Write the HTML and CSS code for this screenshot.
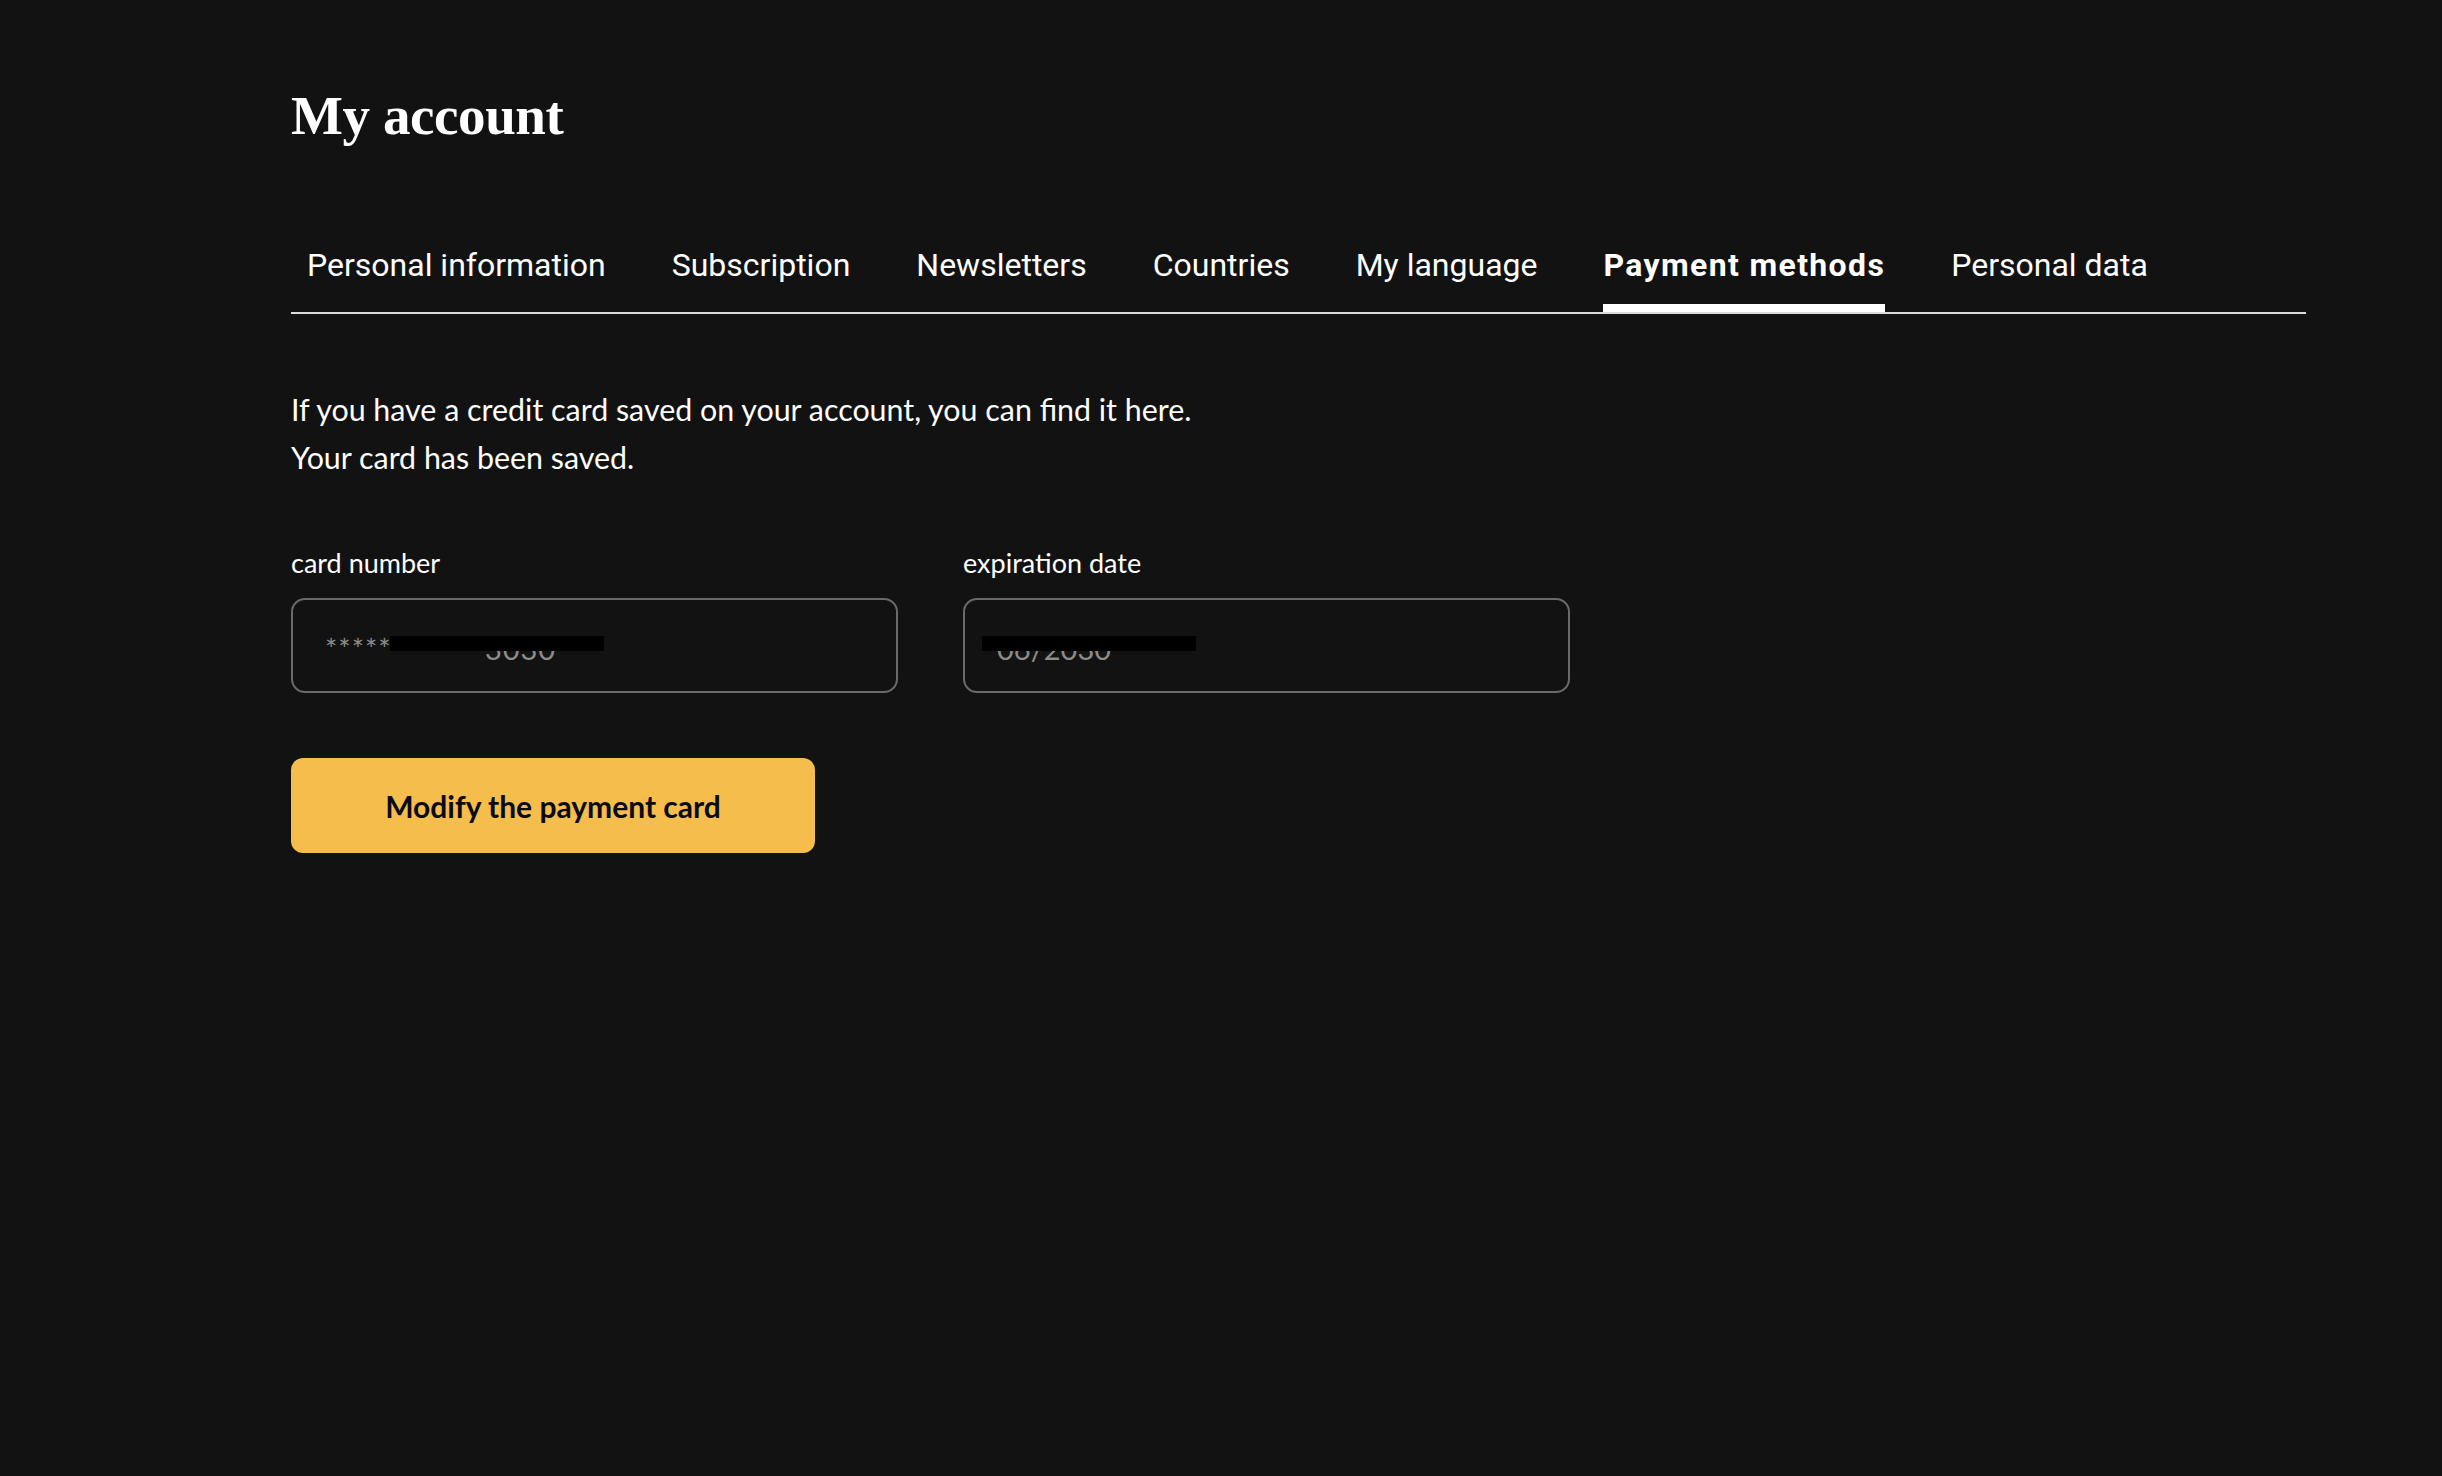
FILE: index.html
```html
<!DOCTYPE html>
<html lang="en">
<head>
    <meta charset="UTF-8">
    <meta name="viewport" content="width=device-width, initial-scale=1.0">
    <title>My account - Payment methods</title>
    <link rel="stylesheet" href="styles.css">
</head>
<body>
    <div class="page">
        <h1 class="title">My account</h1>

        <nav class="tabs">
            <a class="tab" href="#">Personal information</a>
            <a class="tab" href="#">Subscription</a>
            <a class="tab" href="#">Newsletters</a>
            <a class="tab" href="#">Countries</a>
            <a class="tab" href="#">My language</a>
            <a class="tab active" href="#">Payment methods</a>
            <a class="tab" href="#">Personal data</a>
        </nav>

        <div class="intro">
            <p>If you have a credit card saved on your account, you can find it here.</p>
            <p>Your card has been saved.</p>
        </div>

        <div class="card-fields">
            <div class="field">
                <label for="card-number">card number</label>
                <div class="input-wrap">
                    <input type="text" class="card-number" id="card-number" value="************3030" readonly>
                    <span class="redact redact-number"></span>
                </div>
            </div>
            <div class="field">
                <label for="card-date">expiration date</label>
                <div class="input-wrap">
                    <input type="text" id="card-date" value="06/2030" readonly>
                    <span class="redact redact-date"></span>
                </div>
            </div>
        </div>

        <button class="modify-btn">Modify the payment card</button>
    </div>
</body>
</html>
```

FILE: styles.css
```css
body {
    margin: 0;
    padding: 0;
    background-color: #121212;
    color: #ffffff;
    font-family: Lato, "Open Sans", sans-serif;
}

.page {
    width: 2015px;
    margin-left: 291px;
    padding-top: 83px;
}

.title {
    margin: 0;
    font-family: "Liberation Serif", serif;
    font-size: 55px;
    line-height: 66px;
    font-weight: 700;
    letter-spacing: -0.4px;
}

/* tabs */
.tabs {
    display: flex;
    gap: 66px;
    margin-top: 96px;
    padding-left: 16px;
    border-bottom: 2px solid #dcdcdc;
}

.tab {
    font-family: Roboto, sans-serif;
    font-size: 32px;
    line-height: 40px;
    color: #ffffff;
    text-decoration: none;
    padding-bottom: 19px;
    border-bottom: 8px solid transparent;
}

.tab.active {
    font-weight: 700;
    letter-spacing: 1.35px;
    border-bottom-color: #ffffff;
}

.intro {
    margin-top: 71px;
}

.intro p {
    margin: 0;
    font-size: 30.4px;
    line-height: 48px;
}

/* card fields */
.card-fields {
    display: flex;
    gap: 65px;
    margin-top: 66px;
}

.field label {
    display: block;
    font-size: 27px;
    line-height: 32px;
    margin-bottom: 19px;
}

.input-wrap {
    position: relative;
    width: 607px;
}

.input-wrap input {
    box-sizing: border-box;
    width: 100%;
    height: 95px;
    padding: 6px 32px 0;
    background-color: #121212;
    border: 2px solid #6a6a6a;
    border-radius: 14px;
    color: #8c8c8c;
    font-family: Lato, sans-serif;
    font-size: 29px;
    outline: none;
}

.input-wrap input.card-number {
    letter-spacing: 1px;
}

.redact {
    position: absolute;
    top: 38px;
    height: 15px;
    width: 214px;
    background-color: #000000;
}

.redact-number {
    left: 99px;
}

.redact-date {
    left: 19px;
}

.modify-btn {
    display: block;
    margin-top: 65px;
    width: 524px;
    height: 95px;
    background-color: #f5bd4b;
    color: #0b0b16;
    border: none;
    border-radius: 12px;
    font-family: Lato, sans-serif;
    font-size: 30px;
    font-weight: 700;
    cursor: pointer;
}
```
